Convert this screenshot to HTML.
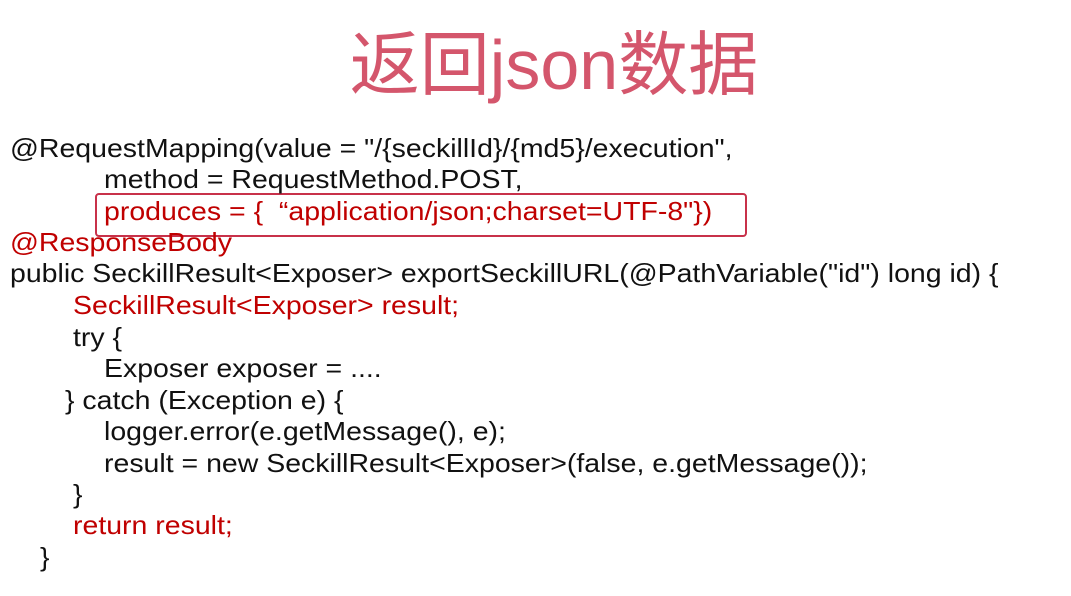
<!DOCTYPE html>
<html><head><meta charset="utf-8"><style>
body{margin:0;width:1071px;height:596px;background:#fff;position:relative;overflow:hidden;font-family:"Liberation Sans","Noto Sans CJK SC",sans-serif;}
.t{position:absolute;left:0;width:1108px;top:22px;text-align:center;font-size:70px;color:#d4566c;line-height:86px;}
.l{position:absolute;font-size:26px;line-height:30px;color:#111;white-space:pre;transform:scaleX(1.095);transform-origin:0 0;}
.r{color:#c00000;}
.box{position:absolute;left:95px;top:193px;width:648px;height:40px;border:2px solid #c8314a;border-radius:4px;}
</style></head><body>
<div class="t">返回json数据</div>
<div class="box"></div>
<div class="l" style="left:10px;top:133px">@RequestMapping(value = "/{seckillId}/{md5}/execution",</div>
<div class="l" style="left:104px;top:164px">method = RequestMethod.POST,</div>
<div class="l r" style="left:104px;top:196px">produces = {  “application/json;charset=UTF-8"})</div>
<div class="l r" style="left:10px;top:227px">@ResponseBody</div>
<div class="l" style="left:10px;top:258px">public SeckillResult&lt;Exposer&gt; exportSeckillURL(@PathVariable("id") long id) {</div>
<div class="l r" style="left:73px;top:290px">SeckillResult&lt;Exposer&gt; result;</div>
<div class="l" style="left:73px;top:322px">try {</div>
<div class="l" style="left:104px;top:353px">Exposer exposer = ....</div>
<div class="l" style="left:65px;top:385px">} catch (Exception e) {</div>
<div class="l" style="left:104px;top:416px">logger.error(e.getMessage(), e);</div>
<div class="l" style="left:104px;top:448px">result = new SeckillResult&lt;Exposer&gt;(false, e.getMessage());</div>
<div class="l" style="left:73px;top:479px">}</div>
<div class="l r" style="left:73px;top:510px">return result;</div>
<div class="l" style="left:40px;top:542px">}</div>
</body></html>
